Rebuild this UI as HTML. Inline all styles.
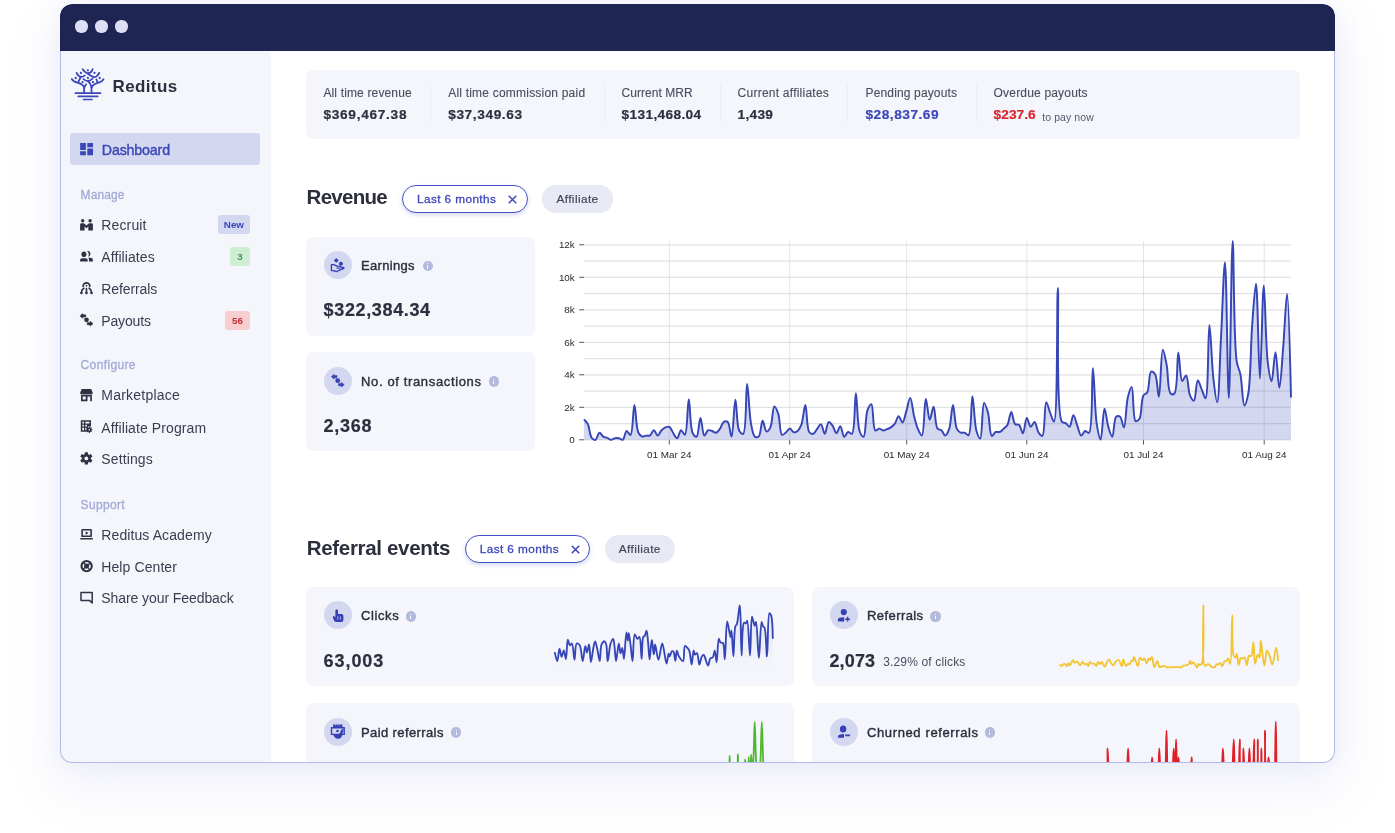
<!DOCTYPE html>
<html lang="en">
<head>
<meta charset="utf-8">
<title>Reditus Dashboard</title>
<style>
*{box-sizing:border-box;margin:0;padding:0}
html,body{width:1395px;height:833px;overflow:hidden;background:#fff}
body{position:relative;font-family:"Liberation Sans",Arial,Helvetica,sans-serif;color:#2d2f3e;-webkit-font-smoothing:antialiased}
.shadow{position:absolute;left:60px;top:4px;width:1275px;height:758px;border-radius:12px;box-shadow:0 22px 50px 6px rgba(120,130,215,.105),0 0 26px rgba(120,130,215,.09)}
.win{position:absolute;left:60px;top:4px;width:1275.4px;height:758.7px;border-radius:12px;overflow:hidden;background:#fff}
.pg{will-change:transform;position:absolute;left:-60px;top:-4px;width:1395px;height:833px}
.frame{position:absolute;left:60px;top:50.5px;width:1275.4px;height:712.2px;border-radius:0 0 12px 12px;border:1.8px solid #b2baed;border-top:none;pointer-events:none}
.tbar{position:absolute;left:60px;top:4px;width:1275.4px;height:46.5px;background:#1e2552;border-radius:12px 12px 0 0}
.dot{position:absolute;top:20.3px;width:12.4px;height:12.4px;border-radius:50%;background:#dcdff5}
.side{position:absolute;left:60px;top:50.5px;width:211px;height:713px;background:#f5f6fb}
.abs{position:absolute;white-space:nowrap;line-height:1}
.logo-t{left:112.5px;top:77.5px;font-size:17px;font-weight:700;color:#2d2f3e}
.act{position:absolute;left:70px;top:133px;width:190px;height:31.5px;border-radius:3px;background:#d3d7f0}
.act-t{left:101.8px;top:142.5px;font-size:14.2px;color:#3b47b8;font-weight:400;-webkit-text-stroke:.4px #3b47b8}
.sec{font-size:12px;color:#a3a9d6;left:80.6px;-webkit-text-stroke:.3px #a3a9d6}
.mi{left:101.3px;font-size:14px;color:#3a3d50}
.ico{position:absolute;overflow:visible}
.bdg{position:absolute;border-radius:3px;font-size:9.8px;font-weight:700;text-align:center;line-height:19px;height:19px}
.card{position:absolute;background:#f5f6fb;border-radius:7px}
.sl{font-size:12px;color:#4a4d60;-webkit-text-stroke:.12px #4a4d60}
.sv{font-size:13.7px;font-weight:700;color:#2d2f3e;-webkit-text-stroke:.2px}
.dv{position:absolute;top:85px;width:1px;height:36px;background:#ebecf3}
.h2{font-size:20.5px;font-weight:700;color:#2d2f3e}
.pill{position:absolute;height:27.4px;border-radius:14px;font-size:11.8px;line-height:26px;white-space:nowrap;letter-spacing:.4px;padding-top:.9px}
.pill.o{border:1.4px solid #4552c4;background:#fff;color:#3b47b8;box-shadow:0 2px 4px rgba(69,82,196,.22);line-height:24px;-webkit-text-stroke:.3px #3b47b8}
.pill.g{background:#e7e9f4;color:#43465a;-webkit-text-stroke:.2px #43465a}
.circ{position:absolute;width:28px;height:28px;border-radius:50%;background:#d3d7f0}
.ct{font-size:13px;color:#2d2f3e;-webkit-text-stroke:.4px #2d2f3e}
.cv{font-size:18px;font-weight:700;color:#2d2f3e;-webkit-text-stroke:.2px #2d2f3e}
.info{position:absolute;width:10.4px;height:10.4px;border-radius:50%;background:#b4b9de}
.info:before{content:"";position:absolute;left:4.6px;top:4.6px;width:1.3px;height:3.4px;background:#f5f6fb}
.info:after{content:"";position:absolute;left:4.6px;top:2.4px;width:1.3px;height:1.3px;background:#f5f6fb}
svg text{font-family:"Liberation Sans",Arial,Helvetica,sans-serif}
</style>
</head>
<body>
<div class="shadow"></div>
<div class="win"><div class="pg">
<div class="tbar"></div>
<div class="dot" style="left:75.3px"></div><div class="dot" style="left:95.2px"></div><div class="dot" style="left:115.4px"></div>

<!-- sidebar -->
<div class="side"></div>
<svg class="ico" style="left:0;top:0" width="1395" height="833" viewBox="0 0 1395 833">
<g fill="none" stroke="#3b47b8" stroke-width="1.75" stroke-linecap="round" stroke-linejoin="round">
<path d="M75.400 93.200H100.500" stroke-width="1.700"/><path d="M78.300 96.400H97.700" stroke-width="1.700"/><path d="M83.600 99.500H92" stroke-width="1.700"/>
<path d="M82.600 69.200C84 72.500 88 73.500 90.500 75.500C92.500 77 95 77.600 96.500 76.300C98 75 98.900 74 99.300 72.900"/>
<path d="M92.600 69.200C92 71.800 90 73 87.900 73.100"/>
<path d="M76.600 72.900C77.500 75 79.500 76.600 80.900 76.900C82.300 76.900 83.800 76.400 84.800 75.600"/>
<path d="M80.900 76.900C80 78.500 79 80 78.300 82.300"/>
<path d="M71.800 79C72.800 81 75 82 77.600 82.600C80.500 83.500 83.700 84.800 84.100 87.500V92.600"/>
<path d="M84.200 88C84.400 86.500 85.300 85.400 86.100 84.200"/>
<path d="M83.500 79.200C85 80.600 86.500 81.100 88 81.100C89.800 80.900 91.500 79.800 92.600 78.500"/>
<path d="M88 81.100C90 83 91.500 85 91.500 88V92.600"/>
<path d="M103.600 79.200C102.600 81.200 100.400 82.200 97.800 82.800C95 83.700 92.400 85 91.600 87.500"/>
<path d="M96.500 79.300C96.700 80.600 97.200 81.700 97.800 82.600"/>
</g>
<g fill="#3b47b8"><circle cx="87.9" cy="70.3" r="1.150"/><circle cx="80.9" cy="72.9" r="1.150"/><circle cx="94.5" cy="72.900" r="1.150"/><circle cx="75.7" cy="78" r="1.150"/><circle cx="87.9" cy="77.900" r="1.150"/><circle cx="99.700" cy="78" r="1.150"/><circle cx="82.600" cy="82.200" r="1.150"/><circle cx="93" cy="82.200" r="1.150"/></g>
</svg>

<div class="abs logo-t" style="letter-spacing:0.38px">Reditus</div>
<div class="act"></div>
<svg class="ico" style="left:77.8px;top:141.1px" width="17.2" height="16.4" viewBox="0 0 24 24" preserveAspectRatio="none"><path fill="#3b47b8" d="M3 13h8V3H3v10zm0 8h8v-6H3v6zm10 0h8V11h-8v10zm0-18v6h8V3h-8z"/></svg>
<div class="abs act-t" style="letter-spacing:-0.14px">Dashboard</div>

<div class="abs sec" style="top:189.3px;letter-spacing:0.10px">Manage</div>
<div class="abs mi" style="top:218px;letter-spacing:0.14px">Recruit</div>
<div class="abs mi" style="top:249.7px;letter-spacing:0.08px">Affiliates</div>
<div class="abs mi" style="top:281.7px;letter-spacing:-0.12px">Referrals</div>
<div class="abs mi" style="top:313.5px;letter-spacing:-0.15px">Payouts</div>
<div class="bdg" style="left:218px;top:215.3px;width:31.8px;background:#d3d7f0;color:#3b47b8">New</div>
<div class="bdg" style="left:230px;top:247px;width:19.8px;background:#cdeed3;color:#3f9a4e">3</div>
<div class="bdg" style="left:225.2px;top:310.5px;width:24.6px;background:#f8cdd0;color:#bf2f33">56</div>

<div class="abs sec" style="top:359.1px;letter-spacing:0.36px">Configure</div>
<div class="abs mi" style="top:388px;letter-spacing:0.22px">Marketplace</div>
<div class="abs mi" style="top:420.6px;letter-spacing:0.10px">Affiliate Program</div>
<div class="abs mi" style="top:451.8px;letter-spacing:0.12px">Settings</div>

<div class="abs sec" style="top:498.9px;letter-spacing:0.34px">Support</div>
<div class="abs mi" style="top:527.6px;letter-spacing:0.10px">Reditus Academy</div>
<div class="abs mi" style="top:559.6px;letter-spacing:0.09px">Help Center</div>
<div class="abs mi" style="top:591.4px;letter-spacing:-0.08px">Share your Feedback</div>
<svg class="ico" style="left:0;top:0" width="1395" height="833" viewBox="0 0 1395 833">
<g fill="#2f3243" stroke="none">
<!-- recruit -->
<circle cx="82.7" cy="220.7" r="1.7"/><circle cx="90.1" cy="220.7" r="1.7"/>
<path d="M80.100 230.400V224.600Q80.100 223.200 81.500 223.200H83.400Q84.100 223.200 84.600 223.700L86.450 225.500L88.300 223.700Q88.800 223.200 89.500 223.200H91.500Q92.900 223.200 92.900 224.600V230.400H88.300V226.500L86.450 228.200L84.600 226.500V230.400Z"/>
<!-- affiliates -->
<ellipse cx="83.9" cy="254.300" rx="2.500" ry="2.800"/>
<path d="M80.100 261.600V260Q80.100 258.300 82.200 258.300H85.600Q87.700 258.300 87.700 260V261.600Z"/>
<path d="M86.900 251.100A2.600 2.900 0 1 1 88 256.700A4.200 4.200 0 0 0 86.900 251.100Z"/>
<path d="M89 261.600V259.800Q89 258.500 88.200 257.700H90.600Q92.900 257.800 92.900 260V261.600Z"/>
<!-- referrals -->
<path d="M83.100 286.200A3.350 3.350 0 0 1 89.800 286.200" fill="none" stroke="#2f3243" stroke-width="1.7" stroke-linecap="round"/>
<circle cx="86.45" cy="285.700" r="0.900"/>
<path d="M86.450 288.600V292.500M83.800 288.200Q81.500 289.400 81.400 292.500M89.100 288.200Q91.400 289.400 91.500 292.500" fill="none" stroke="#2f3243" stroke-width="1.600" stroke-linecap="round"/>
<circle cx="81.400" cy="293" r="1.300"/><circle cx="86.450" cy="293" r="1.300"/><circle cx="91.500" cy="293" r="1.300"/>
<!-- payouts -->
<circle cx="86.5" cy="319.800" r="2.350"/>
<path d="M79.900 315.900L82.700 313.500L83 314.700L85.800 314.800V317L83 317.100L82.700 318.300Z" stroke="#2f3243" stroke-width=".5" stroke-linejoin="round"/>
<path d="M93.100 323.700L90.300 326.100L90 324.900L87.200 324.800V322.600L90 322.500L90.300 321.300Z" stroke="#2f3243" stroke-width=".5" stroke-linejoin="round"/>
<!-- marketplace -->
<path d="M81.700 389H91.200L92.600 392.600V394.200H80.300V392.600Z"/>
<path fill-rule="evenodd" d="M81 394.800H91.900V401.200H81ZM82.700 396.400V399.600H85.700V396.400ZM87.500 396.400V401.200H90.200V396.400Z"/>
<!-- affiliate program -->
<path fill-rule="evenodd" d="M80.800 420.300H91V426.500H88V431.800H80.800ZM82.300 421.800V423.400H84V421.800ZM85.300 421.800V423.400H89.500V421.800ZM82.300 424.800V426.400H84V424.800ZM85.300 424.800V426.400H87V424.800ZM82.300 427.800V430.300H84V427.800ZM85.300 427.800V430.300H86.500V427.800Z"/>
<g transform="translate(89.300 429.800)"><circle r="2.050"/><rect x="-0.650" y="-3.100" width="1.300" height="6.200" rx="0.3"/><rect x="-3.100" y="-0.650" width="6.200" height="1.300" rx="0.3"/><rect x="-0.650" y="-3.100" width="1.300" height="6.200" rx="0.3" transform="rotate(45)"/><rect x="-3.100" y="-0.650" width="6.200" height="1.300" rx="0.3" transform="rotate(45)"/><circle r="0.800" fill="#f5f6fb"/></g>
<!-- settings -->
<g transform="translate(86.350 458.400)"><circle r="4.400"/><rect x="-1.700" y="-6.200" width="3.400" height="12.400" rx="0.700"/><rect x="-1.700" y="-6.200" width="3.400" height="12.400" rx="0.700" transform="rotate(60)"/><rect x="-1.700" y="-6.200" width="3.400" height="12.400" rx="0.700" transform="rotate(120)"/><circle r="1.900" fill="#f5f6fb"/></g>
<!-- academy -->
<path fill-rule="evenodd" d="M82.600 529H90.600Q91.900 529 91.900 530.300V537H81.300V530.300Q81.300 529 82.600 529ZM82.900 530.500V535.500H90.300V530.500Z"/>
<path d="M85.700 531.200V534.800L88.500 533Z"/>
<rect x="80.200" y="537.900" width="12.800" height="1.700" rx="0.700"/>
<!-- help -->
<circle cx="86.600" cy="566.100" r="6.150"/>
<circle cx="86.600" cy="566.100" r="3.350" fill="none" stroke="#f5f6fb" stroke-width="1.500" stroke-dasharray="3.660 1.600" stroke-dashoffset="-0.800" transform="rotate(45 86.600 566.100)"/>
<!-- feedback -->
<path d="M81 592.400H92.200V602.900L89.700 600.600H81Z" fill="none" stroke="#2f3243" stroke-width="1.500" stroke-linejoin="round"/>
</g>
</svg>


<!-- stats bar -->
<div class="card" style="left:306px;top:69.5px;width:994px;height:69.7px"></div>
<div class="abs sl" style="left:323.4px;top:86.6px;letter-spacing:0.15px">All time revenue</div>
<div class="abs sv" style="left:323.4px;top:108.4px;letter-spacing:0.70px">$369,467.38</div>
<div class="dv" style="left:429.6px"></div>
<div class="abs sl" style="left:448.2px;top:86.6px;letter-spacing:0.21px">All time commission paid</div>
<div class="abs sv" style="left:448.2px;top:108.4px;letter-spacing:0.60px">$37,349.63</div>
<div class="dv" style="left:603.5px"></div>
<div class="abs sl" style="left:621.6px;top:86.6px;letter-spacing:0.04px">Current MRR</div>
<div class="abs sv" style="left:621.6px;top:108.4px;letter-spacing:0.34px">$131,468.04</div>
<div class="dv" style="left:720px"></div>
<div class="abs sl" style="left:737.6px;top:86.6px;letter-spacing:0.24px">Current affiliates</div>
<div class="abs sv" style="left:737.6px;top:108.4px;letter-spacing:0.28px">1,439</div>
<div class="dv" style="left:847px"></div>
<div class="abs sl" style="left:865.5px;top:86.6px;letter-spacing:0.15px">Pending payouts</div>
<div class="abs sv" style="left:865.5px;top:108.4px;color:#3b47b8;letter-spacing:0.51px">$28,837.69</div>
<div class="dv" style="left:975.5px"></div>
<div class="abs sl" style="left:993.6px;top:86.6px;letter-spacing:0.18px">Overdue payouts</div>
<div class="abs sv" style="left:993.6px;top:108.4px;color:#dc2430;letter-spacing:0.05px">$237.6</div>
<div class="abs" style="left:1042.3px;top:111.6px;font-size:10.5px;color:#565a70;letter-spacing:0.07px">to pay now</div>

<!-- revenue -->
<div class="abs h2" style="left:306.6px;top:186.7px;letter-spacing:-0.73px">Revenue</div>
<div class="pill o" style="left:402.4px;top:185.3px;width:125.8px;padding-left:13.6px">Last 6 months</div>
<svg class="ico" style="left:506.7px;top:193.7px" width="11" height="11" viewBox="0 0 10 10"><path d="M1.6 1.6L8.4 8.4M8.4 1.6L1.6 8.4" stroke="#3b47b8" stroke-width="1.35" fill="none"/></svg>
<div class="pill g" style="left:542.1px;top:185.3px;width:70.8px;text-align:center">Affiliate</div>

<div class="card" style="left:306px;top:237.2px;width:229.2px;height:98.4px"></div>
<div class="circ" style="left:323.9px;top:251.1px"></div>
<div class="abs ct" style="left:361px;top:259.4px;letter-spacing:0.31px">Earnings</div>
<div class="info" style="left:422.5px;top:260.8px"></div>
<div class="abs cv" style="left:323.6px;top:301.3px;letter-spacing:0.64px">$322,384.34</div>

<div class="card" style="left:306px;top:352.3px;width:229.2px;height:98.9px"></div>
<div class="circ" style="left:323.9px;top:366.5px"></div>
<div class="abs ct" style="left:361px;top:374.7px;letter-spacing:0.64px">No. of transactions</div>
<div class="info" style="left:488.6px;top:376.2px"></div>
<div class="abs cv" style="left:323.6px;top:416.7px;letter-spacing:0.74px">2,368</div>

<svg class="ico" style="left:0;top:0" width="1395" height="833" viewBox="0 0 1395 833">
<line x1="584" x2="1291" y1="439.80" y2="439.80" stroke="#e2e2e2" stroke-width="1.3"/>
<line x1="584" x2="1291" y1="423.55" y2="423.55" stroke="#e2e2e2" stroke-width="1.3"/>
<line x1="584" x2="1291" y1="407.30" y2="407.30" stroke="#e2e2e2" stroke-width="1.3"/>
<line x1="584" x2="1291" y1="391.05" y2="391.05" stroke="#e2e2e2" stroke-width="1.3"/>
<line x1="584" x2="1291" y1="374.80" y2="374.80" stroke="#e2e2e2" stroke-width="1.3"/>
<line x1="584" x2="1291" y1="358.55" y2="358.55" stroke="#e2e2e2" stroke-width="1.3"/>
<line x1="584" x2="1291" y1="342.30" y2="342.30" stroke="#e2e2e2" stroke-width="1.3"/>
<line x1="584" x2="1291" y1="326.05" y2="326.05" stroke="#e2e2e2" stroke-width="1.3"/>
<line x1="584" x2="1291" y1="309.80" y2="309.80" stroke="#e2e2e2" stroke-width="1.3"/>
<line x1="584" x2="1291" y1="293.55" y2="293.55" stroke="#e2e2e2" stroke-width="1.3"/>
<line x1="584" x2="1291" y1="277.30" y2="277.30" stroke="#e2e2e2" stroke-width="1.3"/>
<line x1="584" x2="1291" y1="261.05" y2="261.05" stroke="#e2e2e2" stroke-width="1.3"/>
<line x1="584" x2="1291" y1="244.80" y2="244.80" stroke="#e2e2e2" stroke-width="1.3"/>
<line x1="669.3" x2="669.3" y1="241.5" y2="440" stroke="#dcdcdc" stroke-width="0.8"/>
<line x1="789.7" x2="789.7" y1="241.5" y2="440" stroke="#dcdcdc" stroke-width="0.8"/>
<line x1="906.7" x2="906.7" y1="241.5" y2="440" stroke="#dcdcdc" stroke-width="0.8"/>
<line x1="1026.8" x2="1026.8" y1="241.5" y2="440" stroke="#dcdcdc" stroke-width="0.8"/>
<line x1="1143.5" x2="1143.5" y1="241.5" y2="440" stroke="#dcdcdc" stroke-width="0.8"/>
<line x1="1264.2" x2="1264.2" y1="241.5" y2="440" stroke="#dcdcdc" stroke-width="0.8"/>
<path d="M583.9,419.5Q586.7,421.8 587.8,423.9C589.5,427.1 589.7,435.4 591.7,437.9C592.8,439.2 594.4,440.2 595.6,439.8C597.1,439.3 598.0,433.0 599.4,432.8C600.6,432.6 601.9,435.7 603.3,436.6C604.5,437.3 605.9,437.3 607.2,437.9C608.5,438.4 609.8,439.8 611.1,439.8C612.4,439.8 613.7,438.4 615.0,438.2C616.3,437.9 617.6,437.9 618.9,438.2C620.2,438.4 621.6,440.2 622.8,439.8C624.4,439.1 625.1,431.3 626.6,431.0C627.8,430.8 629.4,435.4 630.5,435.1C633.0,434.3 633.1,405.0 634.4,405.0C635.7,405.0 635.9,427.6 638.3,432.5C639.4,434.7 640.8,436.1 642.2,436.6C643.4,436.9 644.8,435.7 646.1,435.6C647.3,435.4 648.8,436.2 649.9,435.6C651.5,434.8 652.5,430.2 653.8,430.2C655.1,430.2 656.4,435.6 657.7,435.6C659.0,435.6 660.2,431.6 661.6,430.2C662.8,429.0 664.1,428.0 665.5,427.4C666.7,426.9 668.2,426.3 669.4,426.8C671.0,427.5 671.9,431.3 673.3,433.3C674.5,435.1 675.9,438.3 677.1,438.2C678.6,438.0 679.6,430.4 681.0,430.2C682.2,430.1 683.8,435.1 684.9,434.8C687.5,434.0 687.5,399.3 688.8,399.3C690.1,399.3 689.9,428.0 692.7,433.3C693.8,435.4 695.5,437.1 696.6,436.7C698.6,436.0 699.1,418.0 700.5,418.0C701.7,418.0 702.5,435.2 704.3,435.6C705.4,435.8 706.7,430.8 708.2,430.2C709.4,429.8 710.8,430.6 712.1,431.0C713.4,431.5 714.8,433.0 716.0,432.8C717.4,432.6 718.7,430.5 719.9,428.9C721.3,427.0 722.1,422.9 723.8,421.9C724.9,421.3 726.6,421.1 727.7,421.9C729.8,423.6 730.4,436.6 731.5,436.6C733.3,436.4 734.1,399.7 735.4,399.7C736.7,399.7 736.5,426.4 739.3,431.0C740.4,432.8 742.1,434.3 743.2,433.8C746.7,432.1 745.7,383.9 747.1,383.9C748.3,383.9 749.1,414.0 751.0,423.6C752.1,429.1 752.8,435.0 754.8,436.6C755.9,437.4 757.7,437.4 758.7,436.6C760.9,434.8 761.2,420.9 762.6,420.8C763.8,420.7 764.9,431.2 766.5,431.5C767.6,431.8 769.3,429.6 770.4,427.4C772.5,423.3 772.5,406.8 774.3,406.5C775.4,406.3 777.1,410.5 778.2,413.6C780.0,418.7 779.7,433.7 782.0,434.8C783.1,435.3 784.7,433.5 785.9,432.5C787.3,431.4 788.5,428.4 789.8,428.4C791.1,428.4 792.3,432.0 793.7,432.3C794.9,432.6 796.4,432.0 797.6,431.0C799.2,429.7 800.4,427.3 801.5,424.4C803.2,419.7 804.1,405.0 805.4,405.0C806.8,405.1 806.5,428.4 809.2,432.0C810.3,433.4 811.9,434.1 813.1,433.8C814.5,433.5 815.7,430.8 817.0,429.2C818.3,427.6 819.7,424.0 820.9,424.2C822.4,424.4 823.5,433.8 824.8,433.8C826.1,433.7 827.0,422.5 828.7,422.1C829.8,421.8 831.4,424.1 832.6,425.7C834.0,427.6 835.1,433.1 836.4,433.1C837.7,433.2 839.1,426.1 840.3,426.2C841.7,426.3 842.6,436.4 844.2,436.7C845.4,436.9 846.7,432.3 848.1,432.0C849.3,431.7 850.9,434.4 852.0,433.8C855.3,431.9 854.5,393.3 855.9,393.3C857.1,393.3 857.1,424.8 859.7,431.5C860.8,434.3 862.6,437.0 863.6,436.7C865.8,436.2 865.4,415.6 867.5,410.1C868.6,407.2 870.3,404.0 871.4,404.2C873.5,404.7 872.6,429.2 875.3,430.5C876.4,431.1 877.9,428.6 879.2,428.6C880.5,428.6 881.7,430.4 883.1,430.5C884.3,430.6 885.7,429.7 886.9,429.2C888.3,428.7 889.6,428.3 890.8,427.4C892.2,426.5 893.5,425.4 894.7,423.9C896.2,421.9 897.3,416.3 898.6,416.2C899.9,416.2 901.3,422.7 902.5,422.6C904.0,422.4 905.1,414.9 906.4,410.9C907.7,406.7 909.0,397.8 910.3,397.9C911.7,397.9 912.7,410.7 914.1,416.2C915.3,421.0 916.5,425.8 918.0,429.2C919.2,431.8 920.8,435.8 921.9,435.6C924.3,435.0 924.3,399.1 925.8,399.0C927.0,399.0 928.2,419.6 929.7,419.7C930.9,419.7 932.4,406.6 933.6,406.7C935.1,406.7 935.0,425.5 937.5,428.6C938.5,429.9 940.2,429.3 941.3,430.2C942.8,431.4 944.0,435.6 945.2,435.6C946.6,435.5 948.0,432.2 949.1,429.2C951.1,423.9 951.7,405.0 953.0,405.0C954.3,405.0 954.6,424.6 956.9,428.9C958.0,431.0 959.3,432.1 960.8,432.7C962.0,433.1 963.4,432.3 964.6,432.7C966.0,433.1 967.5,435.8 968.5,435.2C971.7,433.8 971.1,396.1 972.4,396.1C973.7,396.1 974.2,422.8 976.3,430.2C977.4,434.0 979.1,438.7 980.2,438.5C982.3,438.1 982.1,403.2 984.1,402.9C985.2,402.8 986.8,408.6 988.0,412.7C989.6,418.7 989.6,435.2 991.8,435.9C992.9,436.2 994.3,432.6 995.7,432.0C996.9,431.5 998.4,432.4 999.6,432.0C1001.0,431.5 1002.2,430.1 1003.5,428.9C1004.8,427.7 1006.3,426.8 1007.4,424.9C1009.1,421.9 1010.0,412.0 1011.3,412.0C1012.5,412.0 1013.2,422.5 1015.2,424.2C1016.2,425.1 1017.9,424.0 1019.0,424.9C1020.8,426.2 1021.8,433.4 1022.9,433.3C1024.4,433.2 1025.3,418.2 1026.8,418.0C1028.0,417.9 1029.2,426.6 1030.7,426.8C1031.9,427.0 1033.4,421.7 1034.6,421.9C1036.1,422.2 1036.8,430.1 1038.5,432.5C1039.6,434.1 1041.3,436.3 1042.3,435.9C1045.1,434.8 1044.3,402.3 1046.2,402.1C1047.3,402.0 1048.8,409.3 1050.1,412.7C1051.4,415.8 1052.9,421.8 1054.0,421.6C1058.1,420.8 1056.6,287.9 1057.9,287.9C1059.2,287.9 1055.3,412.6 1061.8,421.6C1062.9,423.2 1064.4,422.3 1065.7,423.1C1067.1,423.9 1068.4,427.1 1069.5,426.8C1071.2,426.4 1072.1,415.3 1073.4,415.3C1074.7,415.2 1076.0,422.2 1077.3,425.7C1078.6,429.0 1079.7,435.3 1081.2,435.6C1082.4,435.8 1083.7,431.3 1085.1,431.0C1086.3,430.8 1087.9,433.5 1089.0,432.8C1093.2,430.3 1091.5,368.1 1092.9,368.1C1094.1,368.1 1094.7,410.7 1096.7,423.6C1097.8,430.5 1099.5,439.5 1100.6,439.5C1102.2,439.4 1103.0,408.7 1104.5,408.6C1105.7,408.6 1106.8,422.0 1108.4,427.1C1109.5,430.9 1111.1,436.8 1112.3,436.7C1113.9,436.6 1113.7,418.8 1116.2,416.7C1117.2,415.8 1119.0,416.0 1120.1,416.7C1121.9,418.0 1122.8,427.6 1123.9,427.4C1125.7,427.3 1126.0,404.9 1127.8,397.6C1128.9,393.1 1130.6,386.9 1131.7,387.0C1133.6,387.2 1132.7,419.7 1135.6,421.1C1136.7,421.6 1138.4,420.3 1139.5,418.7C1141.9,415.0 1141.0,399.4 1143.4,395.4C1144.4,393.6 1146.2,394.1 1147.2,392.4C1149.5,388.7 1148.8,372.6 1151.1,371.6C1152.2,371.1 1153.9,372.4 1155.0,374.0C1157.4,377.6 1157.8,396.8 1158.9,396.7C1160.5,396.7 1160.9,349.9 1162.8,349.8C1163.9,349.7 1165.5,359.3 1166.7,365.2C1168.2,373.2 1167.6,390.9 1170.6,393.5C1171.6,394.4 1173.4,394.5 1174.4,393.5C1178.0,390.3 1176.9,352.6 1178.3,352.5C1179.5,352.5 1180.0,380.4 1182.2,381.0C1183.3,381.2 1185.0,375.2 1186.1,375.5C1188.0,375.9 1188.1,391.0 1190.0,395.4C1191.1,398.0 1192.8,401.0 1193.9,400.8C1195.8,400.4 1196.1,380.7 1197.8,380.5C1198.9,380.4 1200.4,386.2 1201.6,389.1C1203.0,392.1 1204.5,398.4 1205.5,398.2C1208.5,397.7 1208.0,324.9 1209.4,324.9C1210.6,324.9 1211.7,363.5 1213.3,377.7C1214.4,387.5 1216.1,402.5 1217.2,402.4C1219.0,402.3 1219.8,358.6 1221.1,335.8C1222.4,311.9 1223.8,262.2 1225.0,262.2C1226.5,262.2 1227.6,397.9 1228.8,397.9C1230.2,397.9 1231.3,240.9 1232.7,240.9C1233.9,240.9 1233.5,340.6 1236.6,360.8C1237.7,367.9 1239.4,369.2 1240.5,374.8C1242.1,383.0 1242.6,405.3 1244.4,405.5C1245.5,405.6 1247.2,399.2 1248.3,393.5C1250.7,380.2 1250.7,345.9 1252.1,326.1C1253.3,310.3 1254.9,283.8 1256.0,283.8C1257.7,283.8 1258.6,378.4 1259.9,378.4C1261.2,378.4 1262.4,285.4 1263.8,285.4C1265.0,285.4 1265.6,344.8 1267.7,361.8C1268.8,370.5 1270.4,381.3 1271.6,381.3C1273.0,381.3 1274.2,352.0 1275.5,352.1C1276.8,352.1 1278.1,387.8 1279.3,387.8C1280.7,387.8 1282.0,361.6 1283.2,347.2C1284.6,330.6 1286.0,293.9 1287.1,293.9Q1288.7,293.9 1291.0,397.6L1291.0,439.8 L583.9,439.8 Z" fill="rgba(60,72,185,0.22)" stroke="none"/>
<path d="M583.9,419.5Q586.7,421.8 587.8,423.9C589.5,427.1 589.7,435.4 591.7,437.9C592.8,439.2 594.4,440.2 595.6,439.8C597.1,439.3 598.0,433.0 599.4,432.8C600.6,432.6 601.9,435.7 603.3,436.6C604.5,437.3 605.9,437.3 607.2,437.9C608.5,438.4 609.8,439.8 611.1,439.8C612.4,439.8 613.7,438.4 615.0,438.2C616.3,437.9 617.6,437.9 618.9,438.2C620.2,438.4 621.6,440.2 622.8,439.8C624.4,439.1 625.1,431.3 626.6,431.0C627.8,430.8 629.4,435.4 630.5,435.1C633.0,434.3 633.1,405.0 634.4,405.0C635.7,405.0 635.9,427.6 638.3,432.5C639.4,434.7 640.8,436.1 642.2,436.6C643.4,436.9 644.8,435.7 646.1,435.6C647.3,435.4 648.8,436.2 649.9,435.6C651.5,434.8 652.5,430.2 653.8,430.2C655.1,430.2 656.4,435.6 657.7,435.6C659.0,435.6 660.2,431.6 661.6,430.2C662.8,429.0 664.1,428.0 665.5,427.4C666.7,426.9 668.2,426.3 669.4,426.8C671.0,427.5 671.9,431.3 673.3,433.3C674.5,435.1 675.9,438.3 677.1,438.2C678.6,438.0 679.6,430.4 681.0,430.2C682.2,430.1 683.8,435.1 684.9,434.8C687.5,434.0 687.5,399.3 688.8,399.3C690.1,399.3 689.9,428.0 692.7,433.3C693.8,435.4 695.5,437.1 696.6,436.7C698.6,436.0 699.1,418.0 700.5,418.0C701.7,418.0 702.5,435.2 704.3,435.6C705.4,435.8 706.7,430.8 708.2,430.2C709.4,429.8 710.8,430.6 712.1,431.0C713.4,431.5 714.8,433.0 716.0,432.8C717.4,432.6 718.7,430.5 719.9,428.9C721.3,427.0 722.1,422.9 723.8,421.9C724.9,421.3 726.6,421.1 727.7,421.9C729.8,423.6 730.4,436.6 731.5,436.6C733.3,436.4 734.1,399.7 735.4,399.7C736.7,399.7 736.5,426.4 739.3,431.0C740.4,432.8 742.1,434.3 743.2,433.8C746.7,432.1 745.7,383.9 747.1,383.9C748.3,383.9 749.1,414.0 751.0,423.6C752.1,429.1 752.8,435.0 754.8,436.6C755.9,437.4 757.7,437.4 758.7,436.6C760.9,434.8 761.2,420.9 762.6,420.8C763.8,420.7 764.9,431.2 766.5,431.5C767.6,431.8 769.3,429.6 770.4,427.4C772.5,423.3 772.5,406.8 774.3,406.5C775.4,406.3 777.1,410.5 778.2,413.6C780.0,418.7 779.7,433.7 782.0,434.8C783.1,435.3 784.7,433.5 785.9,432.5C787.3,431.4 788.5,428.4 789.8,428.4C791.1,428.4 792.3,432.0 793.7,432.3C794.9,432.6 796.4,432.0 797.6,431.0C799.2,429.7 800.4,427.3 801.5,424.4C803.2,419.7 804.1,405.0 805.4,405.0C806.8,405.1 806.5,428.4 809.2,432.0C810.3,433.4 811.9,434.1 813.1,433.8C814.5,433.5 815.7,430.8 817.0,429.2C818.3,427.6 819.7,424.0 820.9,424.2C822.4,424.4 823.5,433.8 824.8,433.8C826.1,433.7 827.0,422.5 828.7,422.1C829.8,421.8 831.4,424.1 832.6,425.7C834.0,427.6 835.1,433.1 836.4,433.1C837.7,433.2 839.1,426.1 840.3,426.2C841.7,426.3 842.6,436.4 844.2,436.7C845.4,436.9 846.7,432.3 848.1,432.0C849.3,431.7 850.9,434.4 852.0,433.8C855.3,431.9 854.5,393.3 855.9,393.3C857.1,393.3 857.1,424.8 859.7,431.5C860.8,434.3 862.6,437.0 863.6,436.7C865.8,436.2 865.4,415.6 867.5,410.1C868.6,407.2 870.3,404.0 871.4,404.2C873.5,404.7 872.6,429.2 875.3,430.5C876.4,431.1 877.9,428.6 879.2,428.6C880.5,428.6 881.7,430.4 883.1,430.5C884.3,430.6 885.7,429.7 886.9,429.2C888.3,428.7 889.6,428.3 890.8,427.4C892.2,426.5 893.5,425.4 894.7,423.9C896.2,421.9 897.3,416.3 898.6,416.2C899.9,416.2 901.3,422.7 902.5,422.6C904.0,422.4 905.1,414.9 906.4,410.9C907.7,406.7 909.0,397.8 910.3,397.9C911.7,397.9 912.7,410.7 914.1,416.2C915.3,421.0 916.5,425.8 918.0,429.2C919.2,431.8 920.8,435.8 921.9,435.6C924.3,435.0 924.3,399.1 925.8,399.0C927.0,399.0 928.2,419.6 929.7,419.7C930.9,419.7 932.4,406.6 933.6,406.7C935.1,406.7 935.0,425.5 937.5,428.6C938.5,429.9 940.2,429.3 941.3,430.2C942.8,431.4 944.0,435.6 945.2,435.6C946.6,435.5 948.0,432.2 949.1,429.2C951.1,423.9 951.7,405.0 953.0,405.0C954.3,405.0 954.6,424.6 956.9,428.9C958.0,431.0 959.3,432.1 960.8,432.7C962.0,433.1 963.4,432.3 964.6,432.7C966.0,433.1 967.5,435.8 968.5,435.2C971.7,433.8 971.1,396.1 972.4,396.1C973.7,396.1 974.2,422.8 976.3,430.2C977.4,434.0 979.1,438.7 980.2,438.5C982.3,438.1 982.1,403.2 984.1,402.9C985.2,402.8 986.8,408.6 988.0,412.7C989.6,418.7 989.6,435.2 991.8,435.9C992.9,436.2 994.3,432.6 995.7,432.0C996.9,431.5 998.4,432.4 999.6,432.0C1001.0,431.5 1002.2,430.1 1003.5,428.9C1004.8,427.7 1006.3,426.8 1007.4,424.9C1009.1,421.9 1010.0,412.0 1011.3,412.0C1012.5,412.0 1013.2,422.5 1015.2,424.2C1016.2,425.1 1017.9,424.0 1019.0,424.9C1020.8,426.2 1021.8,433.4 1022.9,433.3C1024.4,433.2 1025.3,418.2 1026.8,418.0C1028.0,417.9 1029.2,426.6 1030.7,426.8C1031.9,427.0 1033.4,421.7 1034.6,421.9C1036.1,422.2 1036.8,430.1 1038.5,432.5C1039.6,434.1 1041.3,436.3 1042.3,435.9C1045.1,434.8 1044.3,402.3 1046.2,402.1C1047.3,402.0 1048.8,409.3 1050.1,412.7C1051.4,415.8 1052.9,421.8 1054.0,421.6C1058.1,420.8 1056.6,287.9 1057.9,287.9C1059.2,287.9 1055.3,412.6 1061.8,421.6C1062.9,423.2 1064.4,422.3 1065.7,423.1C1067.1,423.9 1068.4,427.1 1069.5,426.8C1071.2,426.4 1072.1,415.3 1073.4,415.3C1074.7,415.2 1076.0,422.2 1077.3,425.7C1078.6,429.0 1079.7,435.3 1081.2,435.6C1082.4,435.8 1083.7,431.3 1085.1,431.0C1086.3,430.8 1087.9,433.5 1089.0,432.8C1093.2,430.3 1091.5,368.1 1092.9,368.1C1094.1,368.1 1094.7,410.7 1096.7,423.6C1097.8,430.5 1099.5,439.5 1100.6,439.5C1102.2,439.4 1103.0,408.7 1104.5,408.6C1105.7,408.6 1106.8,422.0 1108.4,427.1C1109.5,430.9 1111.1,436.8 1112.3,436.7C1113.9,436.6 1113.7,418.8 1116.2,416.7C1117.2,415.8 1119.0,416.0 1120.1,416.7C1121.9,418.0 1122.8,427.6 1123.9,427.4C1125.7,427.3 1126.0,404.9 1127.8,397.6C1128.9,393.1 1130.6,386.9 1131.7,387.0C1133.6,387.2 1132.7,419.7 1135.6,421.1C1136.7,421.6 1138.4,420.3 1139.5,418.7C1141.9,415.0 1141.0,399.4 1143.4,395.4C1144.4,393.6 1146.2,394.1 1147.2,392.4C1149.5,388.7 1148.8,372.6 1151.1,371.6C1152.2,371.1 1153.9,372.4 1155.0,374.0C1157.4,377.6 1157.8,396.8 1158.9,396.7C1160.5,396.7 1160.9,349.9 1162.8,349.8C1163.9,349.7 1165.5,359.3 1166.7,365.2C1168.2,373.2 1167.6,390.9 1170.6,393.5C1171.6,394.4 1173.4,394.5 1174.4,393.5C1178.0,390.3 1176.9,352.6 1178.3,352.5C1179.5,352.5 1180.0,380.4 1182.2,381.0C1183.3,381.2 1185.0,375.2 1186.1,375.5C1188.0,375.9 1188.1,391.0 1190.0,395.4C1191.1,398.0 1192.8,401.0 1193.9,400.8C1195.8,400.4 1196.1,380.7 1197.8,380.5C1198.9,380.4 1200.4,386.2 1201.6,389.1C1203.0,392.1 1204.5,398.4 1205.5,398.2C1208.5,397.7 1208.0,324.9 1209.4,324.9C1210.6,324.9 1211.7,363.5 1213.3,377.7C1214.4,387.5 1216.1,402.5 1217.2,402.4C1219.0,402.3 1219.8,358.6 1221.1,335.8C1222.4,311.9 1223.8,262.2 1225.0,262.2C1226.5,262.2 1227.6,397.9 1228.8,397.9C1230.2,397.9 1231.3,240.9 1232.7,240.9C1233.9,240.9 1233.5,340.6 1236.6,360.8C1237.7,367.9 1239.4,369.2 1240.5,374.8C1242.1,383.0 1242.6,405.3 1244.4,405.5C1245.5,405.6 1247.2,399.2 1248.3,393.5C1250.7,380.2 1250.7,345.9 1252.1,326.1C1253.3,310.3 1254.9,283.8 1256.0,283.8C1257.7,283.8 1258.6,378.4 1259.9,378.4C1261.2,378.4 1262.4,285.4 1263.8,285.4C1265.0,285.4 1265.6,344.8 1267.7,361.8C1268.8,370.5 1270.4,381.3 1271.6,381.3C1273.0,381.3 1274.2,352.0 1275.5,352.1C1276.8,352.1 1278.1,387.8 1279.3,387.8C1280.7,387.8 1282.0,361.6 1283.2,347.2C1284.6,330.6 1286.0,293.9 1287.1,293.9Q1288.7,293.9 1291.0,397.6" fill="none" stroke="#3646b6" stroke-width="1.95" stroke-linejoin="round"/>
<line x1="669.3" x2="669.3" y1="440.2" y2="444.6" stroke="#444" stroke-width="0.9"/>
<text x="669.3" y="457.6" font-size="9.9" fill="#2a2a2a" text-anchor="middle">01 Mar 24</text>
<line x1="789.7" x2="789.7" y1="440.2" y2="444.6" stroke="#444" stroke-width="0.9"/>
<text x="789.7" y="457.6" font-size="9.9" fill="#2a2a2a" text-anchor="middle">01 Apr 24</text>
<line x1="906.7" x2="906.7" y1="440.2" y2="444.6" stroke="#444" stroke-width="0.9"/>
<text x="906.7" y="457.6" font-size="9.9" fill="#2a2a2a" text-anchor="middle">01 May 24</text>
<line x1="1026.8" x2="1026.8" y1="440.2" y2="444.6" stroke="#444" stroke-width="0.9"/>
<text x="1026.8" y="457.6" font-size="9.9" fill="#2a2a2a" text-anchor="middle">01 Jun 24</text>
<line x1="1143.5" x2="1143.5" y1="440.2" y2="444.6" stroke="#444" stroke-width="0.9"/>
<text x="1143.5" y="457.6" font-size="9.9" fill="#2a2a2a" text-anchor="middle">01 Jul 24</text>
<line x1="1264.2" x2="1264.2" y1="440.2" y2="444.6" stroke="#444" stroke-width="0.9"/>
<text x="1264.2" y="457.6" font-size="9.9" fill="#2a2a2a" text-anchor="middle">01 Aug 24</text>
<line x1="579.2" x2="584" y1="439.80" y2="439.80" stroke="#444" stroke-width="0.9"/>
<text x="574.8" y="443.30" font-size="9.9" fill="#2a2a2a" text-anchor="end">0</text>
<line x1="579.2" x2="584" y1="407.30" y2="407.30" stroke="#444" stroke-width="0.9"/>
<text x="574.8" y="410.80" font-size="9.9" fill="#2a2a2a" text-anchor="end">2k</text>
<line x1="579.2" x2="584" y1="374.80" y2="374.80" stroke="#444" stroke-width="0.9"/>
<text x="574.8" y="378.30" font-size="9.9" fill="#2a2a2a" text-anchor="end">4k</text>
<line x1="579.2" x2="584" y1="342.30" y2="342.30" stroke="#444" stroke-width="0.9"/>
<text x="574.8" y="345.80" font-size="9.9" fill="#2a2a2a" text-anchor="end">6k</text>
<line x1="579.2" x2="584" y1="309.80" y2="309.80" stroke="#444" stroke-width="0.9"/>
<text x="574.8" y="313.30" font-size="9.9" fill="#2a2a2a" text-anchor="end">8k</text>
<line x1="579.2" x2="584" y1="277.30" y2="277.30" stroke="#444" stroke-width="0.9"/>
<text x="574.8" y="280.80" font-size="9.9" fill="#2a2a2a" text-anchor="end">10k</text>
<line x1="579.2" x2="584" y1="244.80" y2="244.80" stroke="#444" stroke-width="0.9"/>
<text x="574.8" y="248.30" font-size="9.9" fill="#2a2a2a" text-anchor="end">12k</text>
</svg>

<!-- referral events -->
<div class="abs h2" style="left:306.8px;top:538.3px;letter-spacing:-0.33px">Referral events</div>
<div class="pill o" style="left:465.2px;top:535.3px;width:125.3px;padding-left:13.6px">Last 6 months</div>
<svg class="ico" style="left:569.5px;top:543.7px" width="11" height="11" viewBox="0 0 10 10"><path d="M1.6 1.6L8.4 8.4M8.4 1.6L1.6 8.4" stroke="#3b47b8" stroke-width="1.35" fill="none"/></svg>
<div class="pill g" style="left:605px;top:535.3px;width:69.6px;text-align:center">Affiliate</div>

<div class="card" style="left:306px;top:587.3px;width:488.3px;height:98.4px"></div>
<div class="circ" style="left:323.9px;top:601.3px"></div>
<div class="abs ct" style="left:361px;top:609.4px;letter-spacing:0.61px">Clicks</div>
<div class="info" style="left:405.6px;top:611.3px"></div>
<div class="abs cv" style="left:323.6px;top:651.8px;letter-spacing:0.93px">63,003</div>

<div class="card" style="left:812.2px;top:587.3px;width:487.6px;height:98.4px"></div>
<div class="circ" style="left:830px;top:601.3px"></div>
<div class="abs ct" style="left:867px;top:609.4px;letter-spacing:0.42px">Referrals</div>
<div class="info" style="left:930.4px;top:611.3px"></div>
<div class="abs cv" style="left:829.4px;top:651.8px;letter-spacing:0.16px">2,073</div>
<div class="abs" style="left:883.2px;top:656.3px;font-size:12px;color:#4a4d60;letter-spacing:0.15px">3.29% of clicks</div>

<div class="card" style="left:306px;top:703.4px;width:488.3px;height:98.4px"></div>
<div class="circ" style="left:323.9px;top:717.7px"></div>
<div class="abs ct" style="left:361px;top:725.5px;letter-spacing:0.39px">Paid referrals</div>
<div class="info" style="left:451px;top:727.2px"></div>

<div class="card" style="left:812.2px;top:703.4px;width:487.6px;height:98.4px"></div>
<div class="circ" style="left:830px;top:717.7px"></div>
<div class="abs ct" style="left:867px;top:725.5px;letter-spacing:0.62px">Churned referrals</div>
<div class="info" style="left:984.6px;top:727.2px"></div>
<svg class="ico" style="left:0;top:0" width="1395" height="833" viewBox="0 0 1395 833">
<g fill="#3641b6" stroke="none">
<!-- earnings -->
<path d="M336.300 258L338.700 260.400L336.300 262.800L333.900 260.400Z"/>
<circle cx="340.900" cy="263.800" r="2.050"/>
<path d="M331.400 264.700H333.800L337.500 266.400H340.300Q341.100 266.600 340.900 267.500L343.300 267.300Q344.200 267.500 343.900 268.400L336.300 271.700L333.800 270.600H331.400Z" fill="none" stroke="#3641b6" stroke-width="1.300" stroke-linejoin="round"/>
<path d="M336.500 268.200H340.300" fill="none" stroke="#3641b6" stroke-width="1.100"/>
<!-- transactions -->
<circle cx="337.700" cy="380.650" r="2.400"/>
<path d="M331.300 376.700L334 374.300L334.300 375.500L337 375.600V377.800L334.300 377.900L334 379.100Z" stroke="#3641b6" stroke-width=".5" stroke-linejoin="round"/>
<path d="M344.200 384.700L341.500 387.100L341.200 385.900L338.500 385.800V383.600L341.200 383.500L341.500 382.300Z" stroke="#3641b6" stroke-width=".5" stroke-linejoin="round"/>
<!-- clicks -->
<path d="M335.400 610.500Q335.400 609.600 336.300 609.600H337.100Q338 609.600 338 610.500V613.900H341.500Q343.400 613.900 343.400 615.800V620Q343.400 621.900 341.500 621.900H336Q334.600 621.900 334 620.600L332.800 617.300Q332.700 616.200 333.800 616L335.400 616.900Z"/>
<path d="M337.800 616.300V619.700M340.400 616.300V619.700" stroke="#aab1e4" stroke-width="1" fill="none"/>
<!-- paid referrals -->
<path d="M333.100 724.400H342.400V727H333.100Z"/>
<path d="M335.300 724.300V725.600M337.700 724.300V725.600M340.100 724.300V725.600" stroke="#d3d7f0" stroke-width="0.700" fill="none"/>
<path d="M331.500 727.700H344.200V734.400H331.500Z" fill="none" stroke="#3641b6" stroke-width="1.400"/>
<circle cx="337.500" cy="731" r="1.300"/>
<path d="M343.600 728.600Q340.800 729 340.300 732.500Q339.500 734.600 336.500 734.600L333.400 735Q335 738.800 338 738.800Q341.500 738.600 342.400 735V734.500Z"/>
<!-- referrals -->
<circle cx="843.800" cy="612.100" r="3.100"/>
<path d="M837.900 621.500V619.600Q837.900 617.200 844.200 617.200V621.500Z"/>
<path d="M846.900 616.800H848.300V618.500H850V619.900H848.300V621.600H846.900V619.900H845.200V618.500H846.900Z"/>
<!-- churned -->
<ellipse cx="843.100" cy="728.900" rx="3.200" ry="3.500"/>
<path d="M837.900 737.700V736.800Q837.900 734 844 734V737.700Z"/>
<rect x="845.200" y="734.500" width="4.900" height="1.700" rx="0.300"/>
</g>
</svg>

<svg class="ico" style="left:0;top:0" width="1395" height="833" viewBox="0 0 1395 833">
<defs><linearGradient id="gb" x1="0" y1="0" x2="0" y2="1"><stop offset="0" stop-color="#3646b6" stop-opacity=".10"/><stop offset="1" stop-color="#3646b6" stop-opacity="0"/></linearGradient></defs>
<path d="M554.7,652.1Q556.6,661.2 557.3,661.1C558.2,661.1 558.7,648.7 559.5,648.7C560.1,648.6 560.9,656.8 561.6,656.8C562.3,656.8 563.1,650.4 563.8,650.4C564.5,650.4 565.3,659.0 565.9,659.0C566.8,658.9 566.8,639.7 567.8,639.6C568.4,639.6 568.9,645.0 569.8,645.2C570.4,645.4 571.3,643.3 571.9,643.5C573.4,644.1 573.7,659.8 574.5,659.8C575.3,659.8 574.9,644.4 576.7,643.5C577.5,643.1 578.8,644.0 579.7,645.2C581.5,647.7 581.7,661.1 582.7,661.1C583.6,661.1 584.4,646.1 585.3,646.1C585.8,646.0 586.4,652.5 587.0,652.5C587.7,652.5 588.6,644.3 589.1,644.4C590.0,644.4 590.1,662.0 590.9,662.0C591.6,662.0 592.6,651.6 593.4,647.8C594.0,645.2 594.5,641.3 595.2,641.3C595.8,641.3 596.6,646.2 597.3,649.1C598.2,652.6 599.0,661.2 599.7,661.1C600.5,661.1 600.1,647.6 601.6,644.4C602.4,642.7 603.8,641.2 604.6,641.3C605.4,641.5 605.9,643.2 606.3,644.8C607.3,648.2 606.9,661.1 607.6,661.1C608.4,661.2 609.3,647.4 610.6,643.5C611.4,641.3 612.6,638.7 613.2,638.8C614.0,638.9 614.1,643.5 614.5,646.5C615.1,650.6 615.4,661.1 616.1,661.1C616.8,661.1 618.0,643.5 618.8,643.5C619.4,643.5 619.9,653.3 620.5,653.4C621.1,653.4 621.8,647.8 622.3,647.8C623.0,647.8 623.4,659.0 624.0,659.0C624.8,659.0 625.5,632.3 626.4,632.3C626.9,632.3 627.5,640.5 627.8,640.5C628.2,640.5 628.3,633.2 628.7,633.2C629.2,633.2 629.9,639.9 630.4,643.9C631.2,649.0 631.9,661.1 632.6,661.1C633.4,661.1 633.1,634.8 634.7,634.5C635.4,634.3 636.4,638.6 637.3,638.8C638.0,638.9 638.9,636.8 639.5,637.0C641.1,637.8 641.0,659.0 641.6,659.0C642.3,659.0 641.8,638.6 643.3,636.6C643.7,636.1 644.2,636.6 644.6,636.2C645.4,635.4 646.0,630.5 646.5,630.6C647.3,630.7 647.6,637.9 648.1,642.2C648.6,647.4 649.0,659.4 649.6,659.4C650.2,659.4 650.9,640.1 651.7,640.1C652.4,640.0 653.3,654.3 653.9,654.2C654.4,654.2 654.5,644.4 655.1,644.4C655.9,644.3 657.2,659.8 658.4,659.8C659.6,659.9 661.0,643.5 662.3,643.5C663.7,643.5 665.4,663.6 666.5,663.6C667.4,663.6 668.0,653.6 668.6,653.6C669.0,653.5 669.2,656.4 669.6,656.4C670.2,656.5 671.1,651.5 672.0,651.2C672.5,651.0 673.0,651.2 673.4,651.6C674.5,652.8 674.8,660.8 675.4,660.8C675.9,660.7 676.1,650.8 676.8,650.7C677.3,650.6 677.8,654.3 678.7,656.0C679.8,657.8 682.0,661.5 683.0,661.2C684.6,660.8 683.5,646.5 685.0,645.9C685.6,645.6 686.7,647.0 687.4,647.8C688.1,648.6 688.7,649.3 689.3,650.7C690.4,653.5 691.0,664.6 691.7,664.6C692.4,664.6 692.8,650.8 693.6,650.7C694.0,650.6 694.4,654.3 695.0,654.5C695.6,654.7 696.4,652.9 697.0,653.1C698.2,653.5 698.5,664.6 699.4,664.6C700.1,664.6 700.7,658.0 701.8,656.4C702.3,655.6 703.0,654.8 703.7,655.0C705.1,655.4 706.8,665.6 708.0,665.6C709.0,665.5 709.2,659.6 710.4,658.4C711.1,657.6 712.2,658.1 712.8,657.4C713.9,656.2 714.1,650.6 714.7,650.7C715.5,650.7 716.1,662.2 716.6,662.2C717.5,662.2 717.6,638.9 718.8,638.7C719.2,638.6 719.6,641.8 720.5,642.5C721.1,643.0 722.2,642.3 722.9,643.0C724.6,644.8 724.2,659.3 724.8,659.3C725.7,659.3 725.8,621.5 727.2,621.4C728.1,621.3 729.8,637.3 730.6,637.2C731.0,637.2 731.2,630.5 731.5,630.5C732.1,630.5 732.8,656.4 733.4,656.4C734.1,656.4 733.9,630.2 735.4,626.2C735.8,625.1 736.3,625.3 736.8,624.3C738.1,621.3 739.1,605.3 739.9,605.4C741.1,605.4 740.8,655.5 741.6,655.5C742.2,655.5 741.8,624.5 744.0,622.8C744.5,622.4 745.4,623.6 745.9,623.3C746.5,623.0 746.8,620.7 747.2,620.7C748.5,621.0 749.3,655.5 750.0,655.5C750.9,655.5 750.6,616.8 752.0,616.6C752.6,616.5 753.8,625.7 754.6,625.7C755.1,625.7 755.6,621.8 756.0,621.9C757.3,622.1 757.9,657.9 758.9,657.9C759.8,657.9 760.3,622.0 761.6,621.9C762.1,621.8 762.5,625.9 763.2,626.7C763.6,627.1 764.1,626.7 764.4,627.2C766.2,629.5 766.3,656.5 767.0,656.4C768.0,656.4 767.5,613.8 769.4,613.2C769.9,613.1 770.7,614.3 771.2,615.6Q772.5,619.3 772.8,638.7L772.8,668 L554.7,668 Z" fill="url(#gb)"/>
<path d="M554.7,652.1Q556.6,661.2 557.3,661.1C558.2,661.1 558.7,648.7 559.5,648.7C560.1,648.6 560.9,656.8 561.6,656.8C562.3,656.8 563.1,650.4 563.8,650.4C564.5,650.4 565.3,659.0 565.9,659.0C566.8,658.9 566.8,639.7 567.8,639.6C568.4,639.6 568.9,645.0 569.8,645.2C570.4,645.4 571.3,643.3 571.9,643.5C573.4,644.1 573.7,659.8 574.5,659.8C575.3,659.8 574.9,644.4 576.7,643.5C577.5,643.1 578.8,644.0 579.7,645.2C581.5,647.7 581.7,661.1 582.7,661.1C583.6,661.1 584.4,646.1 585.3,646.1C585.8,646.0 586.4,652.5 587.0,652.5C587.7,652.5 588.6,644.3 589.1,644.4C590.0,644.4 590.1,662.0 590.9,662.0C591.6,662.0 592.6,651.6 593.4,647.8C594.0,645.2 594.5,641.3 595.2,641.3C595.8,641.3 596.6,646.2 597.3,649.1C598.2,652.6 599.0,661.2 599.7,661.1C600.5,661.1 600.1,647.6 601.6,644.4C602.4,642.7 603.8,641.2 604.6,641.3C605.4,641.5 605.9,643.2 606.3,644.8C607.3,648.2 606.9,661.1 607.6,661.1C608.4,661.2 609.3,647.4 610.6,643.5C611.4,641.3 612.6,638.7 613.2,638.8C614.0,638.9 614.1,643.5 614.5,646.5C615.1,650.6 615.4,661.1 616.1,661.1C616.8,661.1 618.0,643.5 618.8,643.5C619.4,643.5 619.9,653.3 620.5,653.4C621.1,653.4 621.8,647.8 622.3,647.8C623.0,647.8 623.4,659.0 624.0,659.0C624.8,659.0 625.5,632.3 626.4,632.3C626.9,632.3 627.5,640.5 627.8,640.5C628.2,640.5 628.3,633.2 628.7,633.2C629.2,633.2 629.9,639.9 630.4,643.9C631.2,649.0 631.9,661.1 632.6,661.1C633.4,661.1 633.1,634.8 634.7,634.5C635.4,634.3 636.4,638.6 637.3,638.8C638.0,638.9 638.9,636.8 639.5,637.0C641.1,637.8 641.0,659.0 641.6,659.0C642.3,659.0 641.8,638.6 643.3,636.6C643.7,636.1 644.2,636.6 644.6,636.2C645.4,635.4 646.0,630.5 646.5,630.6C647.3,630.7 647.6,637.9 648.1,642.2C648.6,647.4 649.0,659.4 649.6,659.4C650.2,659.4 650.9,640.1 651.7,640.1C652.4,640.0 653.3,654.3 653.9,654.2C654.4,654.2 654.5,644.4 655.1,644.4C655.9,644.3 657.2,659.8 658.4,659.8C659.6,659.9 661.0,643.5 662.3,643.5C663.7,643.5 665.4,663.6 666.5,663.6C667.4,663.6 668.0,653.6 668.6,653.6C669.0,653.5 669.2,656.4 669.6,656.4C670.2,656.5 671.1,651.5 672.0,651.2C672.5,651.0 673.0,651.2 673.4,651.6C674.5,652.8 674.8,660.8 675.4,660.8C675.9,660.7 676.1,650.8 676.8,650.7C677.3,650.6 677.8,654.3 678.7,656.0C679.8,657.8 682.0,661.5 683.0,661.2C684.6,660.8 683.5,646.5 685.0,645.9C685.6,645.6 686.7,647.0 687.4,647.8C688.1,648.6 688.7,649.3 689.3,650.7C690.4,653.5 691.0,664.6 691.7,664.6C692.4,664.6 692.8,650.8 693.6,650.7C694.0,650.6 694.4,654.3 695.0,654.5C695.6,654.7 696.4,652.9 697.0,653.1C698.2,653.5 698.5,664.6 699.4,664.6C700.1,664.6 700.7,658.0 701.8,656.4C702.3,655.6 703.0,654.8 703.7,655.0C705.1,655.4 706.8,665.6 708.0,665.6C709.0,665.5 709.2,659.6 710.4,658.4C711.1,657.6 712.2,658.1 712.8,657.4C713.9,656.2 714.1,650.6 714.7,650.7C715.5,650.7 716.1,662.2 716.6,662.2C717.5,662.2 717.6,638.9 718.8,638.7C719.2,638.6 719.6,641.8 720.5,642.5C721.1,643.0 722.2,642.3 722.9,643.0C724.6,644.8 724.2,659.3 724.8,659.3C725.7,659.3 725.8,621.5 727.2,621.4C728.1,621.3 729.8,637.3 730.6,637.2C731.0,637.2 731.2,630.5 731.5,630.5C732.1,630.5 732.8,656.4 733.4,656.4C734.1,656.4 733.9,630.2 735.4,626.2C735.8,625.1 736.3,625.3 736.8,624.3C738.1,621.3 739.1,605.3 739.9,605.4C741.1,605.4 740.8,655.5 741.6,655.5C742.2,655.5 741.8,624.5 744.0,622.8C744.5,622.4 745.4,623.6 745.9,623.3C746.5,623.0 746.8,620.7 747.2,620.7C748.5,621.0 749.3,655.5 750.0,655.5C750.9,655.5 750.6,616.8 752.0,616.6C752.6,616.5 753.8,625.7 754.6,625.7C755.1,625.7 755.6,621.8 756.0,621.9C757.3,622.1 757.9,657.9 758.9,657.9C759.8,657.9 760.3,622.0 761.6,621.9C762.1,621.8 762.5,625.9 763.2,626.7C763.6,627.1 764.1,626.7 764.4,627.2C766.2,629.5 766.3,656.5 767.0,656.4C768.0,656.4 767.5,613.8 769.4,613.2C769.9,613.1 770.7,614.3 771.2,615.6Q772.5,619.3 772.8,638.7" fill="none" stroke="#3646b6" stroke-width="1.85" stroke-linejoin="round"/>
<path d="M1059.7,664.5Q1061.2,665.9 1061.9,665.8C1062.7,665.7 1063.6,663.6 1064.5,663.7C1065.3,663.7 1066.4,666.4 1067.0,666.2C1067.7,666.1 1067.8,663.3 1068.3,663.2C1068.8,663.2 1069.5,665.4 1070.1,665.4C1070.9,665.3 1071.9,660.3 1072.8,660.2C1073.5,660.2 1074.0,662.6 1074.8,662.8C1075.5,663.0 1076.6,661.3 1077.4,661.5C1078.4,661.8 1079.2,665.4 1080.1,665.4C1081.0,665.4 1081.7,662.0 1082.5,661.9C1083.3,661.9 1084.3,664.4 1085.1,664.5C1085.7,664.6 1086.3,663.5 1086.8,663.7C1087.5,663.8 1088.1,666.3 1088.5,666.2C1089.1,666.2 1089.1,662.2 1089.8,661.9C1090.4,661.8 1091.2,663.4 1092.0,663.7C1092.7,663.9 1093.5,663.3 1094.1,663.7C1095.0,664.0 1095.7,666.3 1096.3,666.2C1097.0,666.1 1097.3,662.0 1098.0,661.9C1098.5,661.9 1099.2,664.1 1099.7,664.1C1100.3,664.1 1100.8,661.9 1101.5,661.9C1102.4,662.0 1104.0,666.8 1104.9,666.7C1105.7,666.6 1105.9,664.0 1106.6,662.8C1107.3,661.6 1108.2,659.3 1108.9,659.4C1109.6,659.4 1110.1,661.8 1110.9,662.8C1111.7,663.8 1112.7,665.5 1113.5,665.4C1114.3,665.3 1114.7,662.9 1115.6,661.9C1116.5,661.1 1117.8,659.7 1118.7,660.0C1119.9,660.3 1120.9,666.3 1121.7,666.2C1122.5,666.2 1122.7,659.4 1123.4,659.4C1124.1,659.3 1125.0,666.1 1126.0,666.2C1126.6,666.3 1127.5,663.8 1128.1,663.7C1128.6,663.6 1129.0,664.6 1129.4,664.5C1130.1,664.3 1130.8,660.9 1131.6,660.6C1132.0,660.5 1132.5,661.3 1132.8,661.1C1133.5,660.7 1133.4,656.8 1133.9,656.8C1134.4,656.7 1135.2,659.9 1135.9,661.5C1136.5,663.1 1137.2,666.3 1137.8,666.2C1138.6,666.2 1139.0,657.9 1140.0,657.6C1140.6,657.5 1141.5,660.2 1142.3,660.2C1143.0,660.3 1143.8,658.3 1144.5,658.5C1145.4,658.7 1145.9,663.7 1146.6,663.7C1147.3,663.6 1147.9,658.6 1148.6,658.5C1149.1,658.4 1149.6,660.3 1150.1,660.2C1150.7,660.2 1151.4,656.7 1151.9,656.8C1152.9,656.9 1153.3,667.0 1154.4,667.1C1155.2,667.2 1156.3,661.0 1157.2,661.1C1158.0,661.1 1158.3,666.5 1159.5,667.1C1160.3,667.5 1161.6,666.4 1162.5,666.2C1163.4,666.1 1164.4,666.0 1165.1,666.2C1165.8,666.4 1166.1,667.2 1166.8,667.4C1167.8,667.6 1169.3,667.2 1170.8,667.1C1172.5,667.1 1174.6,667.1 1176.5,667.1C1178.3,667.1 1180.7,667.6 1181.8,667.1C1182.5,666.8 1182.6,665.8 1183.2,665.5C1184.1,665.1 1185.6,665.5 1186.6,665.2C1187.5,664.9 1188.4,664.4 1189.0,663.8C1189.6,663.0 1189.8,660.9 1190.2,660.9C1190.6,660.9 1190.9,664.1 1191.4,664.2C1191.8,664.3 1192.3,662.6 1192.8,662.5C1193.4,662.4 1194.2,663.1 1194.8,663.8C1195.6,664.6 1196.2,667.3 1196.9,667.3C1197.5,667.3 1198.0,664.1 1198.6,664.0C1199.0,664.0 1199.3,665.2 1199.8,665.2C1200.4,665.2 1201.3,664.6 1202.0,663.3C1204.7,657.4 1202.9,605.5 1203.4,605.5C1203.9,605.5 1201.1,663.3 1204.8,665.7C1205.8,666.3 1207.0,664.1 1208.2,664.2C1209.6,664.4 1211.2,667.0 1212.5,667.3C1213.4,667.5 1214.2,667.3 1214.9,666.9C1215.7,666.4 1216.1,664.6 1216.8,664.2C1217.4,663.9 1218.2,664.5 1218.8,664.2C1219.3,664.0 1219.7,662.7 1220.2,662.8C1220.9,662.9 1221.7,666.4 1222.3,666.3C1223.1,666.3 1223.4,662.2 1224.3,661.4C1224.9,660.9 1225.8,661.3 1226.4,660.9C1227.1,660.4 1227.6,658.4 1228.2,658.5C1228.9,658.6 1229.7,664.1 1230.3,664.0C1231.9,663.8 1231.6,615.1 1232.2,615.1C1232.7,615.1 1231.6,650.9 1233.6,655.6C1234.2,656.8 1235.1,657.6 1235.6,657.5C1236.2,657.4 1236.4,653.8 1236.8,653.9C1237.5,653.9 1238.0,665.2 1238.7,665.2C1239.3,665.2 1239.7,658.6 1240.8,658.0C1241.4,657.7 1242.3,658.6 1242.9,658.5C1243.6,658.4 1244.2,657.1 1244.7,657.3C1245.7,657.7 1246.1,665.2 1246.8,665.2C1247.5,665.2 1247.8,656.6 1249.0,655.8C1249.5,655.4 1250.4,656.3 1250.9,656.1C1251.4,655.9 1251.6,655.4 1251.9,654.6C1252.6,652.6 1253.0,642.3 1253.5,642.4C1254.1,642.4 1254.1,663.7 1255.0,663.8C1255.7,663.8 1256.7,654.8 1257.6,654.6C1258.2,654.5 1259.1,657.6 1259.6,657.5C1260.7,657.2 1260.1,640.7 1260.8,640.7C1261.6,640.7 1263.2,665.7 1264.4,665.7C1265.2,665.7 1265.8,650.8 1266.9,650.6C1267.6,650.5 1268.4,652.9 1269.2,654.6C1270.2,657.2 1271.3,664.8 1272.3,664.7C1273.6,664.7 1275.2,647.7 1276.2,647.7Q1277.0,647.8 1278.1,660.9" fill="none" stroke="#f4c430" stroke-width="1.8" stroke-linejoin="round"/>
<path d="M555.0,784.0Q555.8,784.0 556.2,784.0C556.6,784.0 557.0,784.0 557.4,784.0C557.8,784.0 558.2,784.0 558.6,784.0C559.0,784.0 559.4,784.0 559.8,784.0C560.2,784.0 560.6,784.0 561.0,784.0C561.4,784.0 561.8,784.0 562.2,784.0C562.6,784.0 563.0,784.0 563.4,784.0C563.8,784.0 564.2,784.0 564.6,784.0C565.0,784.0 565.4,784.0 565.8,784.0C566.2,784.0 566.6,784.0 567.0,784.0C567.4,784.0 567.8,784.0 568.2,784.0C568.6,784.0 568.9,784.0 569.3,784.0C569.7,784.0 570.1,784.0 570.5,784.0C570.9,784.0 571.3,784.0 571.7,784.0C572.1,784.0 572.5,784.0 572.9,784.0C573.3,784.0 573.7,784.0 574.1,784.0C574.5,784.0 574.9,784.0 575.3,784.0C575.7,784.0 576.1,784.0 576.5,784.0C576.9,784.0 577.3,784.0 577.7,784.0C578.1,784.0 578.5,784.0 578.9,784.0C579.3,784.0 579.7,784.0 580.1,784.0C580.5,784.0 580.9,784.0 581.3,784.0C581.7,784.0 582.1,784.0 582.5,784.0C582.9,784.0 583.3,784.0 583.7,784.0C584.1,784.0 584.5,784.0 584.9,784.0C585.3,784.0 585.7,784.0 586.1,784.0C586.5,784.0 586.9,784.0 587.3,784.0C587.7,784.0 588.1,784.0 588.5,784.0C588.9,784.0 589.3,784.0 589.7,784.0C590.1,784.0 590.5,784.0 590.9,784.0C591.3,784.0 591.7,784.0 592.1,784.0C592.5,784.0 592.9,784.0 593.3,784.0C593.7,784.0 594.1,784.0 594.5,784.0C594.9,784.0 595.3,784.0 595.7,784.0C596.0,784.0 596.4,784.0 596.8,784.0C597.2,784.0 597.6,784.0 598.0,784.0C598.4,784.0 598.8,784.0 599.2,784.0C599.6,784.0 600.0,784.0 600.4,784.0C600.8,784.0 601.2,784.0 601.6,784.0C602.0,784.0 602.4,784.0 602.8,784.0C603.2,784.0 603.6,784.0 604.0,784.0C604.4,784.0 604.8,784.0 605.2,784.0C605.6,784.0 606.0,784.0 606.4,784.0C606.8,784.0 607.2,784.0 607.6,784.0C608.0,784.0 608.4,784.0 608.8,784.0C609.2,784.0 609.6,784.0 610.0,784.0C610.4,784.0 610.8,784.0 611.2,784.0C611.6,784.0 612.0,784.0 612.4,784.0C612.8,784.0 613.2,784.0 613.6,784.0C614.0,784.0 614.4,784.0 614.8,784.0C615.2,784.0 615.6,784.0 616.0,784.0C616.4,784.0 616.8,784.0 617.2,784.0C617.6,784.0 618.0,784.0 618.4,784.0C618.8,784.0 619.2,784.0 619.6,784.0C620.0,784.0 620.4,784.0 620.8,784.0C621.2,784.0 621.6,784.0 622.0,784.0C622.4,784.0 622.8,784.0 623.1,784.0C623.5,784.0 623.9,784.0 624.3,784.0C624.7,784.0 625.1,784.0 625.5,784.0C625.9,784.0 626.3,784.0 626.7,784.0C627.1,784.0 627.5,784.0 627.9,784.0C628.3,784.0 628.7,784.0 629.1,784.0C629.5,784.0 629.9,784.0 630.3,784.0C630.7,784.0 631.1,784.0 631.5,784.0C631.9,784.0 632.3,784.0 632.7,784.0C633.1,784.0 633.5,784.0 633.9,784.0C634.3,784.0 634.7,784.0 635.1,784.0C635.5,784.0 635.9,784.0 636.3,784.0C636.7,784.0 637.1,784.0 637.5,784.0C637.9,784.0 638.3,784.0 638.7,784.0C639.1,784.0 639.5,784.0 639.9,784.0C640.3,784.0 640.7,784.0 641.1,784.0C641.5,784.0 641.9,784.0 642.3,784.0C642.7,784.0 643.1,784.0 643.5,784.0C643.9,784.0 644.3,784.0 644.7,784.0C645.1,784.0 645.5,784.0 645.9,784.0C646.3,784.0 646.7,784.0 647.1,784.0C647.5,784.0 647.9,784.0 648.3,784.0C648.7,784.0 649.1,784.0 649.5,784.0C649.9,784.0 650.2,784.0 650.6,784.0C651.0,784.0 651.4,784.0 651.8,784.0C652.2,784.0 652.6,784.0 653.0,784.0C653.4,784.0 653.8,784.0 654.2,784.0C654.6,784.0 655.0,784.0 655.4,784.0C655.8,784.0 656.2,784.0 656.6,784.0C657.0,784.0 657.4,784.0 657.8,784.0C658.2,784.0 658.6,784.0 659.0,784.0C659.4,784.0 659.8,784.0 660.2,784.0C660.6,784.0 661.0,784.0 661.4,784.0C661.8,784.0 662.2,784.0 662.6,784.0C663.0,784.0 663.4,784.0 663.8,784.0C664.2,784.0 664.6,784.0 665.0,784.0C665.4,784.0 665.8,784.0 666.2,784.0C666.6,784.0 667.0,784.0 667.4,784.0C667.8,784.0 668.2,784.0 668.6,784.0C669.0,784.0 669.4,784.0 669.8,784.0C670.2,784.0 670.6,784.0 671.0,784.0C671.4,784.0 671.8,784.0 672.2,784.0C672.6,784.0 673.0,784.0 673.4,784.0C673.8,784.0 674.2,784.0 674.6,784.0C675.0,784.0 675.4,784.0 675.8,784.0C676.2,784.0 676.6,784.0 677.0,784.0C677.4,784.0 677.7,784.0 678.1,784.0C678.5,784.0 678.9,784.0 679.3,784.0C679.7,784.0 680.1,784.0 680.5,784.0C680.9,784.0 681.3,784.0 681.7,784.0C682.1,784.0 682.5,784.0 682.9,784.0C683.3,784.0 683.7,784.0 684.1,784.0C684.5,784.0 684.9,784.0 685.3,784.0C685.7,784.0 686.1,784.0 686.5,784.0C686.9,784.0 687.3,784.0 687.7,784.0C688.1,784.0 688.5,784.0 688.9,784.0C689.3,784.0 689.7,784.0 690.1,784.0C690.5,784.0 690.9,784.0 691.3,784.0C691.7,784.0 692.1,784.0 692.5,784.0C692.9,784.0 693.3,784.0 693.7,784.0C694.1,784.0 694.5,784.0 694.9,784.0C695.3,784.0 695.7,784.0 696.1,784.0C696.5,784.0 696.9,784.0 697.3,784.0C697.7,784.0 698.1,784.0 698.5,784.0C698.9,784.0 699.3,784.0 699.7,784.0C700.1,784.0 700.5,784.0 700.9,784.0C701.3,784.0 701.7,784.0 702.1,784.0C702.5,784.0 702.9,784.0 703.3,784.0C703.7,784.0 704.1,784.0 704.5,784.0C704.8,784.0 705.2,784.0 705.6,784.0C706.0,784.0 706.4,784.0 706.8,784.0C707.2,784.0 707.6,784.0 708.0,784.0C708.4,784.0 708.8,784.0 709.2,784.0C709.6,784.0 710.0,784.0 710.4,784.0C710.8,784.0 711.2,784.0 711.6,784.0C712.0,784.0 712.4,784.0 712.8,784.0C713.2,784.0 713.6,784.0 714.0,784.0C714.4,784.0 714.8,784.0 715.2,784.0C715.6,784.0 716.0,784.0 716.4,784.0C716.8,784.0 717.2,784.0 717.6,784.0C718.0,784.0 718.4,784.0 718.8,784.0C719.2,784.0 719.6,784.0 720.0,784.0C720.4,784.0 720.8,784.0 721.2,784.0C721.6,784.0 722.0,784.0 722.4,784.0C722.8,784.0 723.2,784.0 723.6,784.0C724.0,784.0 724.4,784.0 724.8,784.0C725.2,784.0 725.6,784.0 726.0,784.0C726.4,784.0 726.8,784.0 727.2,784.0C727.6,784.0 728.0,784.3 728.4,784.0C730.0,782.4 729.2,756.0 729.6,756.0C730.0,756.0 729.1,782.4 730.8,784.0C731.1,784.3 731.6,784.0 731.9,784.0C732.3,784.0 732.7,784.0 733.1,784.0C733.5,784.0 733.9,784.0 734.3,784.0C734.7,784.0 735.1,784.0 735.5,784.0C735.9,784.0 736.4,784.3 736.7,784.0C738.5,782.3 737.5,754.4 737.9,754.4C738.3,754.4 737.4,782.3 739.1,784.0C739.5,784.3 739.9,784.0 740.3,784.0C740.7,784.0 741.1,784.0 741.5,784.0C741.9,784.0 742.3,784.0 742.7,784.0C743.1,784.0 743.6,784.3 743.9,784.0C745.5,782.5 744.7,759.3 745.1,759.3C745.5,759.3 744.7,782.5 746.3,784.0C746.6,784.3 747.1,784.3 747.5,784.0C749.1,782.4 748.3,757.0 748.7,757.0C749.1,757.0 749.5,784.0 749.9,784.0C750.3,784.0 750.6,754.4 751.1,754.4C751.4,754.4 751.9,772.0 752.3,772.0C752.7,772.0 753.1,763.0 753.5,757.0C754.0,747.8 754.3,722.0 754.7,722.0C755.1,722.0 755.4,746.6 755.9,757.0C756.2,765.5 756.3,775.5 757.1,780.0C757.4,781.9 757.9,784.0 758.3,784.0C758.7,784.0 759.1,781.9 759.4,780.0C760.2,775.5 760.3,765.5 760.6,757.0C761.1,746.6 761.4,722.0 761.8,722.0C762.2,722.0 762.6,746.6 763.0,757.0C763.4,765.5 763.5,775.5 764.2,780.0C764.6,781.9 764.8,783.5 765.4,784.0C765.8,784.2 766.2,784.0 766.6,784.0C767.0,784.0 767.4,784.0 767.8,784.0C768.2,784.0 768.6,784.0 769.0,784.0C769.4,784.0 769.8,784.0 770.2,784.0C770.6,784.0 771.0,784.0 771.4,784.0Q771.8,784.0 772.6,784.0" fill="none" stroke="#4db82f" stroke-width="1.8" stroke-linejoin="round"/>
<path d="M1059.6,784.0Q1060.4,784.0 1060.8,784.0C1061.2,784.0 1061.6,784.0 1062.0,784.0C1062.4,784.0 1062.8,784.0 1063.2,784.0C1063.6,784.0 1064.1,784.3 1064.4,784.0C1065.3,783.2 1064.7,775.9 1065.6,775.1C1065.9,774.8 1066.5,774.8 1066.8,775.1C1067.7,775.9 1067.1,783.2 1068.0,784.0C1068.3,784.3 1068.8,784.0 1069.2,784.0C1069.6,784.0 1070.0,784.0 1070.4,784.0C1070.8,784.0 1071.2,784.0 1071.6,784.0C1072.0,784.0 1072.4,784.0 1072.8,784.0C1073.2,784.0 1073.6,784.0 1074.0,784.0C1074.4,784.0 1074.8,784.0 1075.2,784.0C1075.6,784.0 1076.0,784.0 1076.4,784.0C1076.8,784.0 1077.2,784.0 1077.6,784.0C1078.0,784.0 1078.4,784.0 1078.8,784.0C1079.2,784.0 1079.6,784.0 1080.0,784.0C1080.4,784.0 1080.8,784.0 1081.2,784.0C1081.6,784.0 1082.0,784.0 1082.4,784.0C1082.8,784.0 1083.3,784.3 1083.6,784.0C1084.5,783.2 1084.4,775.1 1084.8,775.1C1085.2,775.1 1085.1,783.2 1086.0,784.0C1086.4,784.3 1086.8,784.0 1087.2,784.0C1087.6,784.0 1088.1,784.3 1088.4,784.0C1089.3,783.2 1089.2,775.1 1089.6,775.1C1090.0,775.1 1089.9,783.2 1090.8,784.0C1091.2,784.3 1091.6,784.0 1092.0,784.0C1092.4,784.0 1092.8,784.0 1093.2,784.0C1093.6,784.0 1094.0,784.0 1094.4,784.0C1094.8,784.0 1095.2,784.0 1095.6,784.0C1096.0,784.0 1096.4,784.0 1096.8,784.0C1097.2,784.0 1097.6,784.0 1098.0,784.0C1098.4,784.0 1098.8,784.0 1099.2,784.0C1099.6,784.0 1100.0,784.0 1100.4,784.0C1100.8,784.0 1101.2,784.0 1101.6,784.0C1102.0,784.0 1102.5,784.3 1102.8,784.0C1103.7,783.2 1103.1,775.9 1104.0,775.1C1104.4,774.8 1104.8,775.1 1105.2,775.1C1105.6,775.1 1106.1,775.4 1106.4,775.1C1108.1,773.5 1107.2,748.4 1107.6,748.4C1108.0,748.4 1108.3,768.6 1108.8,775.1C1109.2,778.9 1109.1,783.2 1110.0,784.0C1110.4,784.3 1110.8,784.0 1111.2,784.0C1111.6,784.0 1112.0,784.0 1112.4,784.0C1112.8,784.0 1113.2,784.0 1113.6,784.0C1114.0,784.0 1114.5,784.0 1114.9,784.0C1115.3,784.0 1115.7,784.0 1116.1,784.0C1116.5,784.0 1116.9,784.0 1117.3,784.0C1117.7,784.0 1118.1,784.0 1118.5,784.0C1118.9,784.0 1119.3,784.0 1119.7,784.0C1120.1,784.0 1120.5,784.0 1120.9,784.0C1121.3,784.0 1121.7,784.0 1122.1,784.0C1122.5,784.0 1122.9,784.0 1123.3,784.0C1123.7,784.0 1124.1,784.0 1124.5,784.0C1124.9,784.0 1125.3,784.3 1125.7,784.0C1126.6,783.2 1126.5,778.9 1126.9,775.1C1127.4,768.6 1127.7,748.4 1128.1,748.4C1128.5,748.4 1128.7,768.6 1129.3,775.1C1129.6,778.9 1129.6,783.2 1130.5,784.0C1130.8,784.3 1131.3,784.0 1131.7,784.0C1132.1,784.0 1132.5,784.0 1132.9,784.0C1133.3,784.0 1133.7,784.0 1134.1,784.0C1134.5,784.0 1134.9,784.0 1135.3,784.0C1135.7,784.0 1136.1,784.0 1136.5,784.0C1136.9,784.0 1137.3,784.0 1137.7,784.0C1138.1,784.0 1138.5,784.3 1138.9,784.0C1139.8,783.2 1139.7,775.1 1140.1,775.1C1140.5,775.1 1140.4,783.2 1141.3,784.0C1141.6,784.3 1142.1,784.3 1142.5,784.0C1143.4,783.2 1143.3,775.1 1143.7,775.1C1144.1,775.1 1144.0,783.2 1144.9,784.0C1145.2,784.3 1145.7,784.0 1146.1,784.0C1146.5,784.0 1146.9,784.0 1147.3,784.0C1147.7,784.0 1148.1,784.0 1148.5,784.0C1148.9,784.0 1149.4,784.3 1149.7,784.0C1150.6,783.2 1150.5,778.6 1150.9,775.1C1151.4,770.2 1151.7,757.3 1152.1,757.3C1152.5,757.3 1152.8,770.2 1153.3,775.1C1153.6,778.6 1154.1,784.0 1154.5,784.0C1154.9,784.0 1155.3,775.1 1155.7,775.1C1156.1,775.1 1156.5,784.0 1156.9,784.0C1157.3,784.0 1157.8,778.9 1158.1,775.1C1158.7,768.6 1158.9,748.4 1159.3,748.4C1159.7,748.4 1159.9,768.6 1160.5,775.1C1160.8,778.9 1160.8,783.2 1161.7,784.0C1162.0,784.3 1162.5,784.0 1162.9,784.0C1163.3,784.0 1163.8,784.3 1164.1,784.0C1165.0,783.2 1165.0,779.2 1165.3,775.1C1166.0,765.9 1166.1,730.6 1166.5,730.6C1166.9,730.6 1167.0,765.9 1167.7,775.1C1168.0,779.2 1168.5,784.0 1168.9,784.0C1169.3,784.0 1169.7,775.1 1170.1,775.1C1170.5,775.1 1170.9,784.0 1171.3,784.0C1171.7,784.0 1172.2,778.9 1172.5,775.1C1173.1,768.6 1173.3,748.4 1173.7,748.4C1174.1,748.4 1174.5,775.1 1174.9,775.1C1175.3,775.1 1175.7,739.5 1176.1,739.5C1176.5,739.5 1176.8,775.1 1177.3,775.1C1177.7,775.1 1178.1,757.3 1178.5,757.3C1178.9,757.3 1179.2,770.2 1179.7,775.1C1180.1,778.6 1180.0,783.2 1180.9,784.0C1181.2,784.3 1181.7,784.0 1182.1,784.0C1182.5,784.0 1182.9,784.0 1183.3,784.0C1183.7,784.0 1184.1,784.0 1184.5,784.0C1184.9,784.0 1185.3,784.0 1185.7,784.0C1186.1,784.0 1186.5,784.0 1186.9,784.0C1187.3,784.0 1187.7,784.0 1188.1,784.0C1188.5,784.0 1189.0,784.3 1189.3,784.0C1190.2,783.2 1190.2,778.6 1190.5,775.1C1191.0,770.2 1191.3,757.3 1191.7,757.3C1192.1,757.3 1191.6,773.9 1192.9,775.1C1193.3,775.4 1193.8,774.8 1194.1,775.1C1195.0,775.9 1194.4,783.2 1195.3,784.0C1195.7,784.3 1196.2,784.3 1196.5,784.0C1197.8,782.8 1197.3,766.2 1197.7,766.2C1198.1,766.2 1197.6,782.8 1198.9,784.0C1199.3,784.3 1199.7,784.0 1200.1,784.0C1200.5,784.0 1201.0,784.3 1201.3,784.0C1202.2,783.2 1201.6,775.9 1202.5,775.1C1202.9,774.8 1203.4,774.8 1203.7,775.1C1204.6,775.9 1204.0,783.2 1204.9,784.0C1205.3,784.3 1205.8,784.3 1206.1,784.0C1207.0,783.2 1206.9,775.1 1207.3,775.1C1207.7,775.1 1207.6,783.2 1208.5,784.0C1208.9,784.3 1209.3,784.0 1209.7,784.0C1210.1,784.0 1210.6,784.3 1210.9,784.0C1212.2,782.8 1211.6,766.2 1212.1,766.2C1212.5,766.2 1212.9,772.1 1213.3,775.1C1213.7,778.1 1213.6,783.2 1214.5,784.0C1214.9,784.3 1215.3,784.0 1215.7,784.0C1216.1,784.0 1216.6,784.3 1216.9,784.0C1218.3,782.8 1217.7,766.2 1218.1,766.2C1218.5,766.2 1218.0,782.8 1219.3,784.0C1219.7,784.3 1220.2,784.3 1220.5,784.0C1221.5,783.2 1221.4,778.9 1221.7,775.1C1222.3,768.6 1222.5,748.4 1222.9,748.4C1223.3,748.4 1223.6,768.6 1224.2,775.1C1224.5,778.9 1225.0,784.0 1225.4,784.0C1225.8,784.0 1225.6,775.9 1226.6,775.1C1226.9,774.8 1227.4,774.8 1227.8,775.1C1228.7,775.9 1228.0,783.2 1229.0,784.0C1229.3,784.3 1229.8,784.0 1230.2,784.0C1230.6,784.0 1231.0,784.3 1231.4,784.0C1232.7,782.8 1232.2,772.7 1232.6,766.2C1233.0,758.2 1233.4,739.5 1233.8,739.5C1234.2,739.5 1234.3,767.2 1235.0,775.1C1235.3,779.1 1235.3,783.2 1236.2,784.0C1236.5,784.3 1237.0,784.3 1237.4,784.0C1238.3,783.2 1238.2,779.1 1238.6,775.1C1239.2,767.2 1239.4,739.5 1239.8,739.5C1240.2,739.5 1239.1,773.3 1241.0,775.1C1241.3,775.4 1241.8,775.4 1242.2,775.1C1243.8,773.5 1243.0,748.4 1243.4,748.4C1243.8,748.4 1244.0,768.6 1244.6,775.1C1244.9,778.9 1244.9,783.2 1245.8,784.0C1246.1,784.3 1246.6,784.3 1247.0,784.0C1247.9,783.2 1247.8,778.9 1248.2,775.1C1248.8,768.6 1249.0,748.4 1249.4,748.4C1249.8,748.4 1250.0,768.6 1250.6,775.1C1250.9,778.9 1251.4,784.0 1251.8,784.0C1252.2,784.0 1252.6,779.1 1253.0,775.1C1253.6,767.2 1253.8,739.5 1254.2,739.5C1254.6,739.5 1253.5,773.3 1255.4,775.1C1255.7,775.4 1256.2,775.4 1256.6,775.1C1258.5,773.3 1257.4,739.5 1257.8,739.5C1258.2,739.5 1257.1,773.3 1259.0,775.1C1259.3,775.4 1259.8,775.4 1260.2,775.1C1261.8,773.5 1261.0,748.4 1261.4,748.4C1261.8,748.4 1261.0,773.5 1262.6,775.1C1262.9,775.4 1263.4,775.4 1263.8,775.1C1265.9,773.0 1264.6,730.6 1265.0,730.6C1265.4,730.6 1264.3,764.4 1266.2,766.2C1266.5,766.5 1267.1,766.5 1267.4,766.2C1268.3,765.4 1268.2,757.3 1268.6,757.3C1269.1,757.3 1269.3,770.2 1269.8,775.1C1270.1,778.6 1270.1,783.2 1271.0,784.0C1271.3,784.3 1271.8,784.0 1272.2,784.0C1272.6,784.0 1273.1,784.3 1273.4,784.0C1274.3,783.2 1274.3,779.3 1274.6,775.1C1275.4,764.8 1275.4,721.7 1275.8,721.7C1276.2,721.7 1276.2,775.1 1277.0,775.1Q1277.3,775.1 1278.2,766.2" fill="none" stroke="#e02028" stroke-width="1.8" stroke-linejoin="round"/>
</svg>
</div></div>
<div class="frame"></div>
</body>
</html>
